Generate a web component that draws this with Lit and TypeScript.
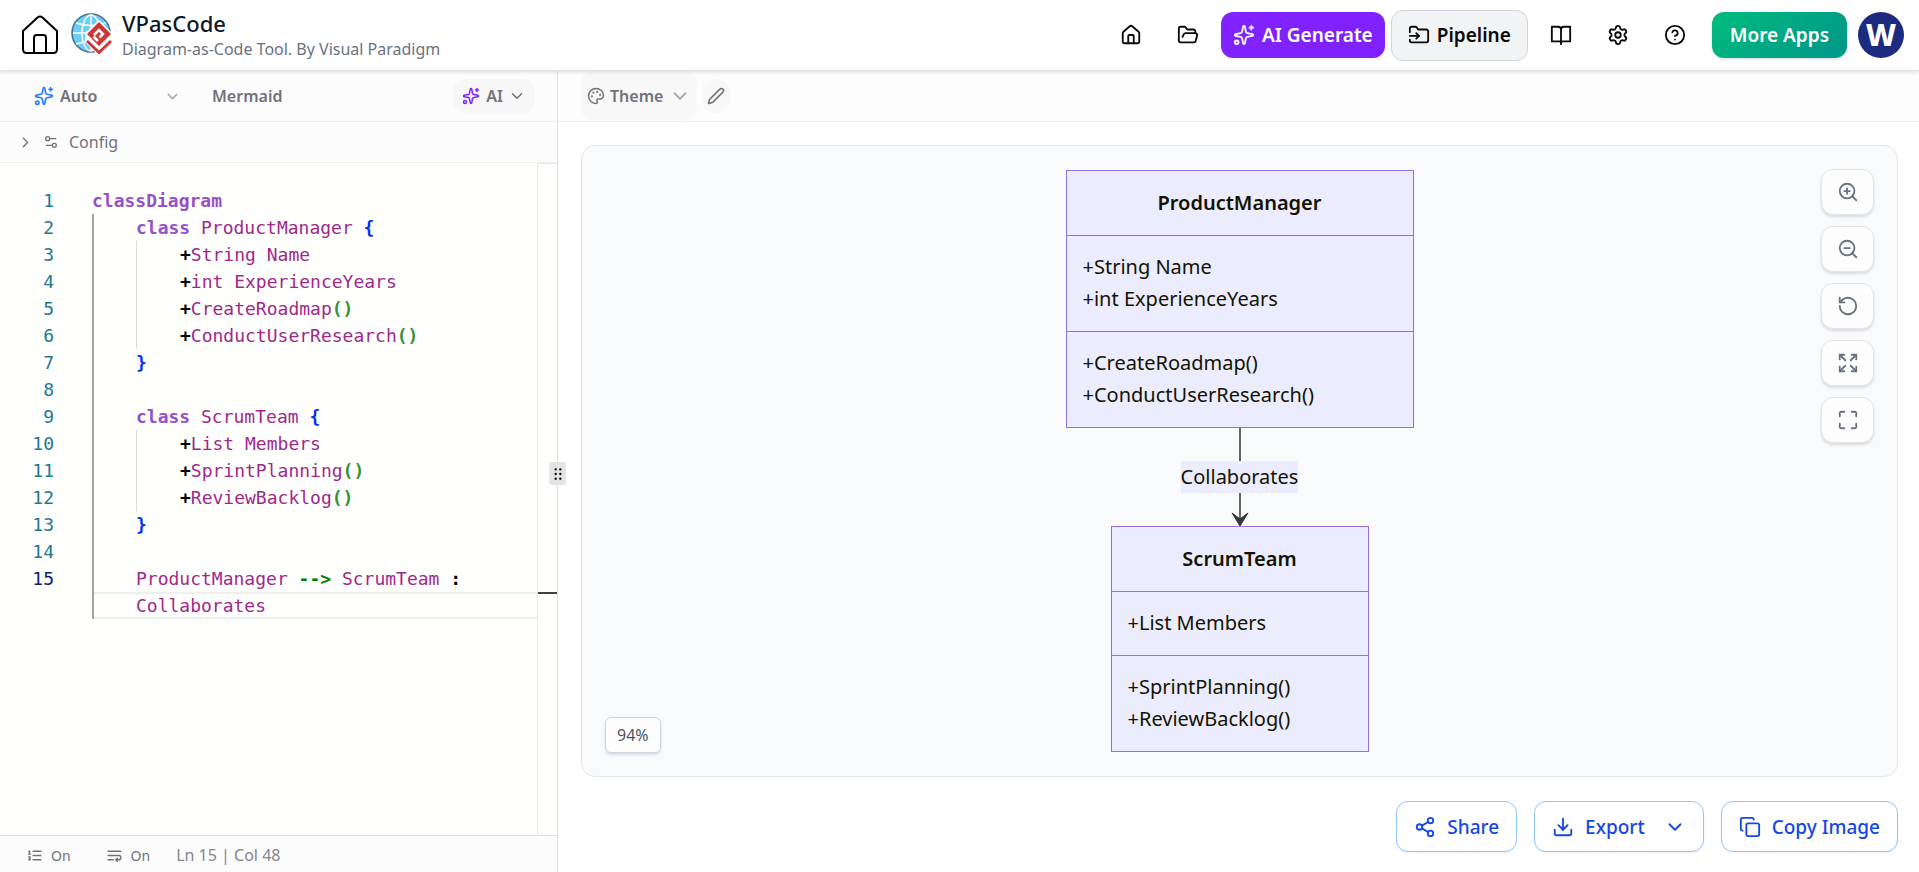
import { LitElement, html, svg, css, nothing } from "lit";
import { customElement, property } from "lit/decorators.js";

const ICONS: Record<string, unknown> = {
  house: svg`<path d="M15 21v-8a1 1 0 0 0-1-1h-4a1 1 0 0 0-1 1v8"/><path d="M3 10a2 2 0 0 1 .709-1.528l7-5.999a2 2 0 0 1 2.582 0l7 5.999A2 2 0 0 1 21 10v9a2 2 0 0 1-2 2H5a2 2 0 0 1-2-2z"/>`,
  folderOpen: svg`<path d="m6 14 1.5-2.9A2 2 0 0 1 9.24 10H20a2 2 0 0 1 1.94 2.5l-1.54 6a2 2 0 0 1-1.95 1.5H4a2 2 0 0 1-2-2V5a2 2 0 0 1 2-2h3.9a2 2 0 0 1 1.69.9l.81 1.2a2 2 0 0 0 1.67.9H18a2 2 0 0 1 2 2v2"/>`,
  folderInput: svg`<path d="M2 9V5a2 2 0 0 1 2-2h3.9a2 2 0 0 1 1.69.9l.81 1.2a2 2 0 0 0 1.67.9H20a2 2 0 0 1 2 2v10a2 2 0 0 1-2 2H4a2 2 0 0 1-2-2v-1"/><path d="M2 13h10"/><path d="m9 16 3-3-3-3"/>`,
  sparkles: svg`<path d="M11.017 2.814a1 1 0 0 1 1.966 0l1.051 5.558a2 2 0 0 0 1.594 1.594l5.558 1.051a1 1 0 0 1 0 1.966l-5.558 1.051a2 2 0 0 0-1.594 1.594l-1.051 5.558a1 1 0 0 1-1.966 0l-1.051-5.558a2 2 0 0 0-1.594-1.594l-5.558-1.051a1 1 0 0 1 0-1.966l5.558-1.051a2 2 0 0 0 1.594-1.594z"/><path d="M20 2v4"/><path d="M22 4h-4"/><circle cx="4" cy="20" r="2"/>`,
  book: svg`<path d="M12 6v16"/><path d="M2 3h7a3 3 0 0 1 3 3 3 3 0 0 1 3-3h7v16h-8a2 2 0 0 0-2 1 2 2 0 0 0-2-1H2z"/>`,
  gear: svg`<path d="M9.671 4.136a2.34 2.34 0 0 1 4.659 0 2.34 2.34 0 0 0 3.319 1.915 2.34 2.34 0 0 1 2.33 4.033 2.34 2.34 0 0 0 0 3.831 2.34 2.34 0 0 1-2.33 4.033 2.34 2.34 0 0 0-3.319 1.915 2.34 2.34 0 0 1-4.659 0 2.34 2.34 0 0 0-3.32-1.915 2.34 2.34 0 0 1-2.33-4.033 2.34 2.34 0 0 0 0-3.831A2.34 2.34 0 0 1 6.35 6.051a2.34 2.34 0 0 0 3.319-1.915"/><circle cx="12" cy="12" r="3"/>`,
  help: svg`<circle cx="12" cy="12" r="10"/><path d="M9.09 9a3 3 0 0 1 5.83 1c0 2-3 3-3 3"/><path d="M12 17h.01"/>`,
  chevronDown: svg`<path d="m6 9 6 6 6-6"/>`,
  chevronRight: svg`<path d="m9 18 6-6-6-6"/>`,
  sliders: svg`<path d="M14 17H5"/><path d="M19 7h-9"/><circle cx="17" cy="17" r="3"/><circle cx="7" cy="7" r="3"/>`,
  palette: svg`<path d="M12 22a1 1 0 0 1 0-20 10 9 0 0 1 10 9 5 5 0 0 1-5 5h-2.25a1.75 1.75 0 0 0-1.4 2.8l.3.4a1.75 1.75 0 0 1-1.4 2.8z"/><circle cx="13.5" cy="6.5" r=".5"/><circle cx="17.5" cy="10.5" r=".5"/><circle cx="6.5" cy="12.5" r=".5"/><circle cx="8.5" cy="7.5" r=".5"/>`,
  pencil: svg`<path d="M21.174 6.812a1 1 0 0 0-3.986-3.987L3.842 16.174a2 2 0 0 0-.5.83l-1.321 4.352a.5.5 0 0 0 .623.622l4.353-1.32a2 2 0 0 0 .83-.497z"/>`,
  listOrdered: svg`<path d="M10 12h11"/><path d="M10 18h11"/><path d="M10 6h11"/><path d="M4 10h2"/><path d="M4 6h1v4"/><path d="M6 18H4c0-1 2-2 2-3s-1-1.5-2-1"/>`,
  wrap: svg`<path d="M3 6h18"/><path d="M3 12h15a3 3 0 1 1 0 6h-4"/><path d="m16 16-2 2 2 2"/><path d="M3 18h7"/>`,
  zoomIn: svg`<circle cx="11" cy="11" r="8"/><path d="m21 21-4.35-4.35"/><path d="M11 8v6"/><path d="M8 11h6"/>`,
  zoomOut: svg`<circle cx="11" cy="11" r="8"/><path d="m21 21-4.35-4.35"/><path d="M8 11h6"/>`,
  reset: svg`<path d="M3 12a9 9 0 1 0 9-9 9.75 9.75 0 0 0-6.74 2.74L3 8"/><path d="M3 3v5h5"/>`,
  expand: svg`<path d="m15 15 6 6"/><path d="m15 9 6-6"/><path d="M21 16v5h-5"/><path d="M21 8V3h-5"/><path d="M3 16v5h5"/><path d="m3 21 6-6"/><path d="M3 8V3h5"/><path d="M9 9 3 3"/>`,
  maximize: svg`<path d="M8 3H5a2 2 0 0 0-2 2v3"/><path d="M21 8V5a2 2 0 0 0-2-2h-3"/><path d="M3 16v3a2 2 0 0 0 2 2h3"/><path d="M16 21h3a2 2 0 0 0 2-2v-3"/>`,
  share: svg`<circle cx="18" cy="5" r="3"/><circle cx="6" cy="12" r="3"/><circle cx="18" cy="19" r="3"/><path d="M8.59 13.51 15.42 17.49"/><path d="M15.41 6.51 8.59 10.49"/>`,
  download: svg`<path d="M21 15v4a2 2 0 0 1-2 2H5a2 2 0 0 1-2-2v-4"/><path d="m7 10 5 5 5-5"/><path d="M12 15V3"/>`,
  copy: svg`<rect width="14" height="14" x="8" y="8" rx="2"/><path d="M4 16c-1.100 0-2-.9-2-2V4c0-1.100.9-2 2-2h10c1.100 0 2 .9 2 2"/>`,
  grip: svg`<circle cx="8" cy="4" r="1"/><circle cx="8" cy="12" r="1"/><circle cx="8" cy="20" r="1"/><circle cx="16" cy="4" r="1"/><circle cx="16" cy="12" r="1"/><circle cx="16" cy="20" r="1"/>`,
};

const icon = (name: string, size = 22) => html`<svg
  width=${size} height=${size} viewBox="0 0 24 24" fill="none" stroke="currentColor"
  stroke-width="2" stroke-linecap="round" stroke-linejoin="round" aria-hidden="true"
>${ICONS[name]}</svg>`;

const shared = css`
  * { box-sizing: border-box; }
  button, select {
    font: inherit; color: inherit; margin: 0; padding: 0;
    border: 0; background: none; cursor: pointer; white-space: nowrap;
  }
  svg { display: block; flex: none; }
`;

@customElement("app-header")
class AppHeader extends LitElement {
  static styles = [shared, css`
    :host {
      display: flex; align-items: center; height: 70px; padding: 0 15px 0 20px;
      background: #fff; color: #0a0a0a; position: relative; z-index: 2;
      border-bottom: 1px solid #dedfe1; box-shadow: 0 1px 4px rgba(0, 0, 0, 0.12);
    }
    .home { display: flex; color: #000; margin-right: 11px; }
    .brand { margin: 0 auto 0 9px; }
    h1 { margin: 0; font-size: 22px; line-height: 28px; font-weight: 500; color: #101828; }
    .tagline { margin: 0; font-size: 16px; line-height: 24px; color: #6a7282; white-space: nowrap; }
    nav { display: flex; align-items: center; gap: 9px; }
    .icon { display: flex; padding: 13px; border-radius: 12px; }
    .cta {
      display: flex; align-items: center; gap: 7px; height: 46px; padding: 0 12px;
      border-radius: 12px; font-size: 19px; font-weight: 600; color: #fff;
    }
    .ai { background: #7f22fe; }
    .pipeline {
      height: 51px; padding: 0 16px; margin-left: -3px; background: #f1f3f5; color: #0a0a0a;
      border: 1px solid #cfd4de;
    }
    .more {
      padding: 0 18px; margin: 0 2px 0 4px; background: linear-gradient(135deg, #00bc7d, #009689);
      box-shadow: 0 1px 3px rgba(0, 0, 0, 0.16);
    }
    .avatar {
      width: 46px; height: 46px; border-radius: 50%; background: #1c2b80; color: #fff;
      font-size: 30px; line-height: 46px; font-weight: 800; text-align: center;
    }
  `];

  render() {
    return html`
      <button class="home" aria-label="Home">
        <svg width="40" height="42" viewBox="0 0 40 42" fill="none" stroke="currentColor" stroke-width="2" stroke-linejoin="round">
          <path d="M3 17 L17.500 3.500 Q20 1.500 22.500 3.500 L37 17 V35 Q37 39 33.500 39 H6.500 Q3 39 3 35 Z"/>
          <path d="M14 39 V24 Q14 21 16.500 21 H23.500 Q26 21 26 24 V39"/>
        </svg>
      </button>
      <svg width="42" height="44" viewBox="0 0 42 44">
        <circle cx="20" cy="20" r="19" fill="#6dcff6" stroke="#3f7389" stroke-width="1.500"/>
        <g fill="none" stroke="#fff" stroke-width="1.400">
          <ellipse cx="20" cy="20" rx="9" ry="18"/>
          <path d="M20 2V38M2 20H38M5 10Q20 15 35 10M5 31Q20 26 35 31"/>
        </g>
        <path fill="#fff" d="M28 7 42 21 40 30 28 43 14 29 14 20Z"/>
        <path fill="#d03434" d="M28 9 40 21 28 33 16 21Z"/>
        <path fill="none" stroke="#fff" stroke-width="2.600" d="M27 28 22.500 23.500M23 22 28 17 32 21 28.500 24.500"/>
        <path fill="none" stroke="#d03434" stroke-width="2.800" d="M16 28 28 39.500 40 28"/>
      </svg>
      <div class="brand">
        <h1>VPasCode</h1>
        <p class="tagline">Diagram-as-Code Tool. By Visual Paradigm</p>
      </div>
      <nav>
        <button class="icon" aria-label="Dashboard">${icon("house")}</button>
        <button class="icon" aria-label="Open">${icon("folderOpen")}</button>
        <button class="cta ai">${icon("sparkles")}AI Generate</button>
        <button class="cta pipeline">${icon("folderInput")}Pipeline</button>
        <button class="icon" aria-label="Guide">${icon("book")}</button>
        <button class="icon" aria-label="Settings">${icon("gear")}</button>
        <button class="icon" aria-label="Help">${icon("help")}</button>
        <button class="cta more">More Apps</button>
        <button class="avatar" aria-label="Account">W</button>
      </nav>
    `;
  }
}

type Token = [kind: string, text: string];
interface Line { depth: number; tokens: Token[]; }

const keyword = (name: string): Line => ({ depth: 1, tokens: [["kw", "class"], ["id", ` ${name} `], ["brace", "{"]] });
const field = (text: string): Line => ({ depth: 2, tokens: [["op", "+"], ["id", text]] });
const method = (text: string): Line => ({ depth: 2, tokens: [["op", "+"], ["id", text], ["paren", "()"]] });
const close: Line = { depth: 1, tokens: [["brace", "}"]] };
const blank: Line = { depth: 1, tokens: [] };

const LINES: Line[] = [
  { depth: 0, tokens: [["kw", "classDiagram"]] },
  keyword("ProductManager"), field("String Name"), field("int ExperienceYears"),
  method("CreateRoadmap"), method("ConductUserResearch"), close, blank,
  keyword("ScrumTeam"), field("List Members"), method("SprintPlanning"), method("ReviewBacklog"), close, blank,
  { depth: 1, tokens: [["id", "ProductManager "], ["arrow", "-->"], ["id", " ScrumTeam "], ["op", ":"]] },
];

@customElement("code-panel")
class CodePanel extends LitElement {
  static styles = [shared, css`
    :host {
      display: flex; flex-direction: column; position: relative; min-width: 0;
      background: #fcfcfc; color: #71717b; border-right: 1px solid #dfdfe2;
    }
    .bar { display: flex; align-items: center; height: 51px; padding: 0 22px 0 34px; border-bottom: 1px solid #f0f0f1; }
    .bar, .pill { font-size: 16px; font-weight: 600; }
    .lang { display: flex; align-items: center; width: 147px; gap: 6px; margin-right: 31px; }
    .lang .mark { color: #2b7fff; }
    .lang select { flex: 1; min-width: 0; appearance: none; }
    .lang .caret { color: #a9a9ae; }
    .pill {
      display: flex; align-items: center; gap: 5px; height: 34px; padding: 0 9px;
      margin-left: auto; border-radius: 12px; background: #f7f7f8;
    }
    .pill .mark { color: #7f22fe; margin-right: 1px; }
    .config {
      display: flex; align-items: center; height: 41px; padding: 0 17px; font-size: 16px;
      border-bottom: 1px solid #f0f0f1; text-align: left;
    }
    .config span { margin: 0 10px 0 9px; }
    .editor { flex: 1; display: flex; background: #fffffe; min-height: 0; }
    .code {
      flex: 1; min-width: 0; margin: 0; padding-top: 24px; color: #000;
      font: 18px/27px "DejaVu Sans Mono", monospace;
    }
    .line { display: grid; grid-template-columns: 54px 38px 1fr; min-height: 27px; }
    .no { text-align: right; color: #237893; }
    .no.active { color: #0b216f; }
    .text { grid-column: 3; display: flex; min-width: 0; white-space: pre; }
    .guide { flex: none; width: 44px; border-left: 1px solid #d9d9d9; }
    .guide.outer { border-left: 2px solid #a3a3a3; }
    .current { box-shadow: inset 0 2px #eee, inset 0 -2px #eee; }
    .kw { color: #9650c8; font-weight: 700; }
    .id { color: #a0288c; }
    .brace { color: #0431fa; font-weight: 700; }
    .paren { color: #319331; font-weight: 700; }
    .arrow { color: #008000; font-weight: 700; }
    .op { font-weight: 700; }
    .ruler { width: 20px; border-left: 1px solid #e8e8e8; border-top: 1px solid #e8e8e8; padding-top: 428px; }
    .tick { height: 2px; background: #424242; }
    .status {
      display: flex; align-items: center; height: 37px; padding: 2px 26px 0; gap: 35px;
      border-top: 1px solid #dfdfe2; font-size: 14px;
    }
    .status button { display: flex; align-items: center; gap: 8px; }
    .pos { font-size: 16px; margin-left: -9px; color: #85858c; }
    .grip {
      position: absolute; right: -9px; top: 391px; z-index: 1; display: grid; place-items: center;
      width: 17px; height: 23px; border-radius: 3px; background: #e4e4e7; color: #000;
    }
  `];

  private row(no: number | null, line: Line, current = false) {
    const guides = Array.from({ length: line.depth }, (_, i) =>
      html`<span class="guide ${i === 0 ? "outer" : ""}"></span>`);
    return html`<div class="line">
      <span class="no ${no === LINES.length ? "active" : ""}">${no ?? nothing}</span>
      <span class="text ${current ? "current" : ""}">${guides}${line.tokens.map(([k, t]) => html`<span class=${k}>${t}</span>`)}</span>
    </div>`;
  }

  render() {
    return html`
      <div class="bar">
        <label class="lang">
          <span class="mark">${icon("sparkles", 20)}</span>
          <select aria-label="Diagram language"><option>Auto</option></select>
          <span class="caret">${icon("chevronDown", 17)}</span>
        </label>
        <span>Mermaid</span>
        <button class="pill"><span class="mark">${icon("sparkles", 18)}</span>AI<span>${icon("chevronDown", 18)}</span></button>
      </div>
      <button class="config">${icon("chevronRight", 17)}<span>${icon("sliders", 16)}</span>Config</button>
      <div class="editor">
        <div class="code" role="textbox" aria-multiline="true" aria-label="Diagram source">
          ${LINES.map((l, i) => this.row(i + 1, l))}
          ${this.row(null, { depth: 1, tokens: [["id", "Collaborates"]] }, true)}
        </div>
        <div class="ruler"><div class="tick"></div></div>
      </div>
      <div class="status">
        <button>${icon("listOrdered", 17)}On</button>
        <button>${icon("wrap", 17)}On</button>
        <span class="pos">Ln 15 | Col 48</span>
      </div>
      <button class="grip" aria-label="Resize panels">${icon("grip", 14)}</button>
    `;
  }
}

@customElement("class-node")
class ClassNode extends LitElement {
  @property() name = "";
  @property({ attribute: false }) groups: string[][] = [];

  static styles = css`
    :host { display: block; background: #ececff; border: 1px solid #9370db; box-sizing: border-box; }
    h2, ul { margin: 0; padding: 16px; font-size: 20px; line-height: 32px; }
    h2 { font-weight: 600; text-align: center; }
    ul { list-style: none; border-top: 1px solid #9370db; padding-top: 15px; }
    li { white-space: nowrap; }
  `;

  render() {
    return html`<h2>${this.name}</h2>${this.groups.map((g) => html`<ul>${g.map((m) => html`<li>${m}</li>`)}</ul>`)}`;
  }
}

@customElement("diagram-panel")
class DiagramPanel extends LitElement {
  static styles = [shared, css`
    :host { display: flex; flex-direction: column; min-width: 0; background: #fff; }
    .bar {
      display: flex; align-items: center; gap: 5px; height: 51px; padding-left: 23px;
      background: #fdfdfd; border-bottom: 1px solid #f0f0f1; color: #71717b;
    }
    .theme {
      display: flex; align-items: center; gap: 5px; height: 50px; padding: 0 6px;
      border-radius: 12px; background: #f8f8f8; font-size: 16px; font-weight: 600;
    }
    .theme select { appearance: none; width: 54px; }
    .theme .caret { color: #a9a9ae; }
    .edit { padding: 8px 5px; border-radius: 12px; background: #f8f8f8; }
    .canvas {
      flex: 1; position: relative; display: flex; align-items: center; justify-content: center;
      margin: 23px 21px 0 23px; border: 1px solid #e3e6ea; border-radius: 14px; background: #f9fafc;
    }
    .graph { display: flex; flex-direction: column; align-items: center; color: #131300; }
    .wide { width: 348px; }
    .narrow { width: 258px; }
    .edge { display: flex; flex-direction: column; align-items: center; font-size: 20px; line-height: 32px; }
    .edge span { background: #ececff; }
    .tools { position: absolute; top: 23px; right: 23px; display: grid; gap: 11px; }
    .tools button, .zoom {
      border: 1px solid #e2e5ea; background: #fdfdfd; box-shadow: 0 2px 3px rgba(0, 0, 0, 0.12);
    }
    .tools button {
      display: grid; place-items: center; width: 53px; height: 46px;
      border-radius: 12px; color: #6a7282;
    }
    .zoom {
      position: absolute; left: 23px; bottom: 23px; padding: 0 11px; border-color: #cfd4de;
      border-radius: 6px; font-size: 16px; line-height: 34px; color: #4a5565;
    }
    .actions { display: flex; justify-content: flex-end; gap: 17px; padding: 24px 21px 20px; }
    .actions button {
      display: flex; align-items: center; gap: 11px; height: 51px; padding: 0 17px;
      border: 1px solid #8ec5ff; border-radius: 12px; background: #fff;
      box-shadow: 0 1px 2px rgba(0, 0, 0, 0.06); font-size: 19px; font-weight: 500; color: #1447e6;
    }
    .actions .caret { margin-left: 8px; }
  `];

  render() {
    return html`
      <div class="bar">
        <label class="theme">
          ${icon("palette", 18)}
          <select aria-label="Theme"><option>Theme</option></select>
          <span class="caret">${icon("chevronDown", 22)}</span>
        </label>
        <button class="edit" aria-label="Edit diagram">${icon("pencil", 18)}</button>
      </div>
      <div class="canvas">
        <div class="graph">
          <class-node class="wide" name="ProductManager" .groups=${[
            ["+String Name", "+int ExperienceYears"], ["+CreateRoadmap()", "+ConductUserResearch()"]]}></class-node>
          <div class="edge">
            <svg width="20" height="33" viewBox="0 0 20 33"><path d="M10 0V33" stroke="#333" stroke-width="1.500"/></svg>
            <span>Collaborates</span>
            <svg width="20" height="33" viewBox="0 0 20 33"><path d="M10 0V28" stroke="#333" stroke-width="1.500"/><path d="M2 20 10 26 18 20 10 33Z" fill="#333" stroke="#333" stroke-linejoin="round"/></svg>
          </div>
          <class-node class="narrow" name="ScrumTeam" .groups=${[
            ["+List Members"], ["+SprintPlanning()", "+ReviewBacklog()"]]}></class-node>
        </div>
        <div class="tools">
          <button aria-label="Zoom in">${icon("zoomIn")}</button>
          <button aria-label="Zoom out">${icon("zoomOut")}</button>
          <button aria-label="Reset view">${icon("reset")}</button>
          <button aria-label="Fit to view">${icon("expand")}</button>
          <button aria-label="Full screen">${icon("maximize")}</button>
        </div>
        <button class="zoom">94%</button>
      </div>
      <div class="actions">
        <button>${icon("share")}Share</button>
        <button>${icon("download")}Export<span class="caret">${icon("chevronDown")}</span></button>
        <button>${icon("copy")}Copy Image</button>
      </div>
    `;
  }
}

@customElement("app-root")
class AppRoot extends LitElement {
  static styles = css`
    :host {
      display: grid; grid-template-rows: auto 1fr; min-height: 100vh;
      font-family: "Noto Sans", "Open Sans", sans-serif;
    }
    .work { display: grid; grid-template-columns: 558fr 1361fr; }
  `;

  render() {
    return html`
      <app-header></app-header>
      <main class="work"><code-panel></code-panel><diagram-panel></diagram-panel></main>
    `;
  }
}
